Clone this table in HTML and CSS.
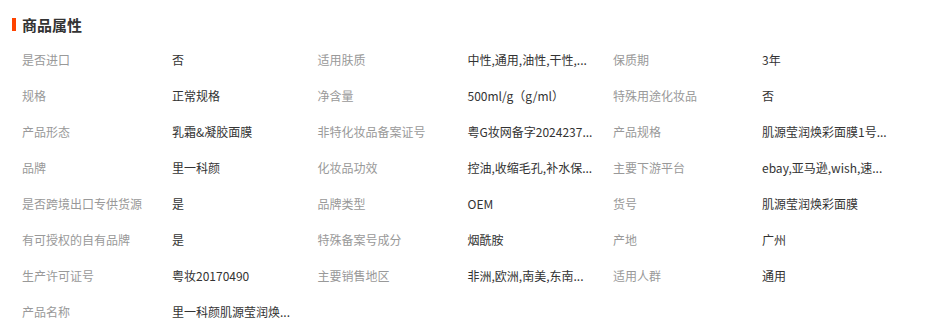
FILE: index.html
```html
<!DOCTYPE html>
<html lang="zh-CN">
<head>
<meta charset="utf-8">
<title>商品属性</title>
<link rel="stylesheet" href="styles.css">
</head>
<body>
<section class="attrs">
  <h2 class="attrs-title">商品属性</h2>
  <div class="attrs-grid">
    <div class="lbl">是否进口</div><div class="val">否</div>
    <div class="lbl">适用肤质</div><div class="val">中性,通用,油性,干性,...</div>
    <div class="lbl">保质期</div><div class="val">3年</div>

    <div class="lbl">规格</div><div class="val">正常规格</div>
    <div class="lbl">净含量</div><div class="val">500ml/g（g/ml）</div>
    <div class="lbl">特殊用途化妆品</div><div class="val">否</div>

    <div class="lbl">产品形态</div><div class="val">乳霜&amp;凝胶面膜</div>
    <div class="lbl">非特化妆品备案证号</div><div class="val">粤G妆网备字2024237...</div>
    <div class="lbl">产品规格</div><div class="val">肌源莹润焕彩面膜1号...</div>

    <div class="lbl">品牌</div><div class="val">里一科颜</div>
    <div class="lbl">化妆品功效</div><div class="val">控油,收缩毛孔,补水保...</div>
    <div class="lbl">主要下游平台</div><div class="val">ebay,亚马逊,wish,速...</div>

    <div class="lbl">是否跨境出口专供货源</div><div class="val">是</div>
    <div class="lbl">品牌类型</div><div class="val">OEM</div>
    <div class="lbl">货号</div><div class="val">肌源莹润焕彩面膜</div>

    <div class="lbl">有可授权的自有品牌</div><div class="val">是</div>
    <div class="lbl">特殊备案号成分</div><div class="val">烟酰胺</div>
    <div class="lbl">产地</div><div class="val">广州</div>

    <div class="lbl">生产许可证号</div><div class="val">粤妆20170490</div>
    <div class="lbl">主要销售地区</div><div class="val">非洲,欧洲,南美,东南...</div>
    <div class="lbl">适用人群</div><div class="val">通用</div>

    <div class="lbl">产品名称</div><div class="val">里一科颜肌源莹润焕...</div>
  </div>
</section>
</body>
</html>
```
FILE: styles.css
```css
html, body {
  margin: 0;
  padding: 0;
  background: #fff;
}
body {
  font-family: "Noto Sans CJK SC", "Noto Sans", sans-serif;
  font-size: 12px;
  color: #333;
}
.attrs {
  padding: 8px 0 0 12px;
}
.attrs-title {
  display: flex;
  align-items: center;
  gap: 6px;
  height: 32px;
  margin: 0 0 1px 0;
  font-size: 15px;
  font-weight: bold;
  color: #333;
}
.attrs-title::before {
  content: "";
  width: 4px;
  height: 13px;
  background: #ff4400;
}
.attrs-grid {
  display: grid;
  grid-template-columns: 150px 145.5px 150px 145.5px 149px 1fr;
  grid-auto-rows: 36px;
  align-items: center;
  margin-left: 10px;
}
.lbl {
  color: #999;
  white-space: nowrap;
}
.val {
  color: #333;
  white-space: nowrap;
}
```
